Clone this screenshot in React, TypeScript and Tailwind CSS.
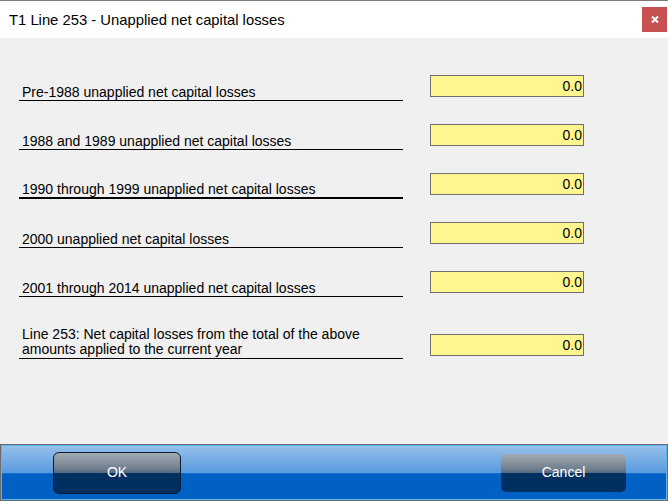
import React from "react";

const rows: { label: string; thick?: boolean }[] = [
  { label: "Pre-1988 unapplied net capital losses" },
  { label: "1988 and 1989 unapplied net capital losses" },
  { label: "1990 through 1999 unapplied net capital losses", thick: true },
  { label: "2000 unapplied net capital losses" },
  { label: "2001 through 2014 unapplied net capital losses" },
];

function Amount() {
  return (
    <div className="ml-[27px] mb-[4px] flex h-[22px] w-[154px] items-center justify-end border border-[#6e6e6e] bg-[#fff68f] pr-[1px] text-[14px] leading-none text-black">
      0.0
    </div>
  );
}

export default function App() {
  return (
    <div
      className="flex h-[501px] w-[668px] flex-col overflow-hidden border-t border-[#7a7a7a] bg-[#f0f0f0]"
      style={{ fontFamily: '"Liberation Sans", Arial, sans-serif' }}
    >
      {/* Title bar */}
      <div className="flex h-[37px] shrink-0 items-center justify-between bg-white">
        <div className="pl-[9px] pt-[1px] text-[14.8px] text-black">
          T1 Line 253 - Unapplied net capital losses
        </div>
        <div className="mr-[1px] flex h-[25px] w-[25px] items-center justify-center bg-[#c75050]">
          <svg width="8" height="7" viewBox="0 0 8 7">
            <path d="M1 0.5 L7 6.5 M7 0.5 L1 6.5" stroke="#ffffff" strokeWidth="2" />
          </svg>
        </div>
      </div>

      {/* Body */}
      <div className="flex flex-1 flex-col pt-[14px]">
        {rows.map((r) => (
          <div key={r.label} className="flex h-[49px] items-end">
            <div
              className={
                "ml-[19px] w-[384px] border-black pl-[3px] text-[14px] leading-[15px] text-black " +
                (r.thick ? "border-b-2" : "border-b")
              }
            >
              {r.label}
            </div>
            <Amount />
          </div>
        ))}
        <div className="flex h-[62px] items-end">
          <div className="ml-[19px] w-[384px] border-b border-black pb-[1px] pl-[3px] text-[14px] leading-[15px] text-black">
            Line 253: Net capital losses from the total of the above
            <br />
            amounts applied to the current year
          </div>
          <div className="mb-[3px]">
            <div className="ml-[27px] flex h-[22px] w-[154px] items-center justify-end border border-[#6e6e6e] bg-[#fff68f] pr-[1px] text-[14px] leading-none text-black">
              0.0
            </div>
          </div>
        </div>
      </div>

      {/* Bottom button bar */}
      <div className="h-[57px] shrink-0 border border-[#6a6a6a]">
        <div className="relative flex h-full items-center border border-[#5cb6ec] bg-[linear-gradient(to_bottom,#97c0ea_0%,#5a9ae0_50%,#1f72cc_51%,#0060c4_54%,#0060c4_100%)]">
          <button className="ml-[51px] flex h-[42px] w-[128px] items-center justify-center rounded-[6px] border border-[#0a1a30] bg-[linear-gradient(to_bottom,#a4acb4_0%,#6f7d8c_40%,#566a82_50%,#00305f_51%,#00305f_100%)] text-[14px] text-white">
            OK
          </button>
          <div className="flex-1" />
          <button className="mr-[40px] flex h-[38px] w-[125px] items-center justify-center rounded-[5px] bg-[linear-gradient(to_bottom,#a4acb4_0%,#6f7d8c_40%,#566a82_50%,#00305f_51%,#00305f_100%)] text-[14px] text-white">
            Cancel
          </button>
        </div>
      </div>
    </div>
  );
}
